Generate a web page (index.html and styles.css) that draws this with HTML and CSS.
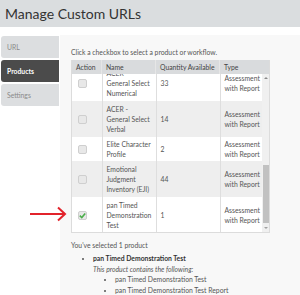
FILE: index.html
```html
<!DOCTYPE html>
<html lang="en">
<head>
  <meta charset="UTF-8" />
  <title>Manage Custom URLs</title>
  <link rel="stylesheet" href="styles.css">
</head>
<body>
  <h1 class="page-title">Manage Custom URLs</h1>

  <div class="layout">
    <nav class="tabs">
      <div class="tab">URL</div>
      <div class="tab active">Products</div>
      <div class="tab">Settings</div>
    </nav>

    <div class="panel">
      <p class="hint">Click a checkbox to select a product or workflow.</p>

      <div class="grid">
        <div class="grid-head">
          <div class="cell c-action">Action</div>
          <div class="cell c-name">Name</div>
          <div class="cell c-qty">Quantity Available</div>
          <div class="cell c-type">Type</div>
        </div>

        <div class="grid-body">
          <div class="viewport">
            <table class="rows">
              <tr>
                <td class="c-action"><span class="check"></span></td>
                <td class="c-name">ACER -<br>General Select<br>Numerical</td>
                <td class="c-qty">33</td>
                <td class="c-type">Assessment<br>with Report</td>
              </tr>
              <tr class="alt">
                <td class="c-action"><span class="check"></span></td>
                <td class="c-name">ACER -<br>General Select<br>Verbal</td>
                <td class="c-qty">14</td>
                <td class="c-type">Assessment<br>with Report</td>
              </tr>
              <tr class="short">
                <td class="c-action"><span class="check"></span></td>
                <td class="c-name">Elite Character<br>Profile</td>
                <td class="c-qty">2</td>
                <td class="c-type">Assessment<br>with Report</td>
              </tr>
              <tr class="alt">
                <td class="c-action"><span class="check"></span></td>
                <td class="c-name">Emotional<br>Judgment<br>Inventory (EJI)</td>
                <td class="c-qty">44</td>
                <td class="c-type">Assessment<br>with Report</td>
              </tr>
              <tr>
                <td class="c-action">
                  <span class="check checked">
                    <svg viewBox="0 0 10 10" width="9" height="9"><path d="M2 5.2 L4.2 7.3 L8 2.8" fill="none" stroke="#4cae4c" stroke-width="1.8"/></svg>
                  </span>
                </td>
                <td class="c-name">pan Timed<br>Demonstration<br>Test</td>
                <td class="c-qty">1</td>
                <td class="c-type">Assessment<br>with Report</td>
              </tr>
            </table>
          </div>
          <div class="scrollbar">
            <span class="arrow up"></span>
            <div class="track"><div class="thumb"></div></div>
            <span class="arrow down"></span>
          </div>
        </div>
      </div>

      <p class="selected">You've selected 1 product</p>
      <ul class="picked">
        <li>
          <strong>pan Timed Demonstration Test</strong>
          <em class="contains">This product contains the following:</em>
          <ul>
            <li>pan Timed Demonstration Test</li>
            <li>pan Timed Demonstration Test Report</li>
          </ul>
        </li>
      </ul>
    </div>
  </div>

  <svg class="pointer" viewBox="0 0 40 18" width="40" height="18">
    <path d="M2 9 H37 M30 2.5 L37 9 L30 15.5" fill="none" stroke="#e2232b" stroke-width="2"/>
  </svg>
</body>
</html>
```

FILE: styles.css
```css
* {
  margin: 0;
  padding: 0;
  box-sizing: border-box;
}

body {
  font-family: 'Lato', 'Liberation Sans', sans-serif;
  font-size: 6.8px;
  line-height: 10px;
  color: #555;
  background: #fff;
  position: relative;
  height: 295px;
  overflow: hidden;
}

.page-title {
  background: #dadddf;
  height: 27px;
  line-height: 27px;
  padding-left: 5px;
  font-size: 14px;
  font-weight: 400;
  color: #333;
}

.layout {
  display: flex;
  margin-top: 8px;
  height: 260px;
}

.tabs {
  width: 60px;
  display: flex;
  flex-direction: column;
  gap: 2px;
  padding: 1px 1px 0 1px;
}

.tab {
  height: 22px;
  line-height: 22px;
  padding-left: 6px;
  background: #dcdee0;
  color: #8a8a8a;
  border-radius: 3px 0 0 3px;
}

.tab.active {
  background: #4b4b4b;
  color: #fff;
  font-weight: 700;
}

.panel {
  flex: 1;
  background: #f8f8f8;
  padding: 12px 0 0 11px;
}

.hint {
  color: #555;
  margin-bottom: 3px;
}

.grid {
  width: 199px;
  border: 1px solid #dcdcdc;
  border-top: none;
}

.grid-head {
  display: flex;
  height: 14px;
  background: #d9dbdd;
  color: #444;
}

.grid-head .cell {
  line-height: 14px;
  padding-left: 4px;
  border-right: 1px solid #e6e6e6;
  white-space: nowrap;
  overflow: hidden;
}

.grid-head .cell:last-child {
  border-right: none;
}

.c-action { width: 30px; }
.c-name { width: 54px; }
.c-qty { width: 64px; }
.grid-head .c-type { flex: 1; }

.grid-body {
  display: flex;
  height: 158px;
}

.viewport {
  width: 191px;
  overflow: hidden;
}

.rows {
  width: 191px;
  border-collapse: collapse;
  table-layout: fixed;
  margin-top: -9px;
}

.rows td {
  padding: 3px 0 3px 4px;
  vertical-align: middle;
  border-right: 1px solid #dedede;
  background: #fff;
  white-space: nowrap;
  overflow: hidden;
}

.rows tr.short td {
  padding-top: 2px;
  padding-bottom: 2px;
}

.rows tr.alt td {
  background: #eeeeee;
}

.rows td.c-action {
  width: 30px;
  padding-left: 6px;
}

.rows td.c-type {
  width: 43px;
  border-right: none;
}

.check {
  display: block;
  width: 9px;
  height: 9px;
  border: 1px solid #cfcfcf;
  border-radius: 2px;
  background: #e8e8e8;
}

.check svg {
  display: block;
  margin: -1px 0 0 -1px;
}

.scrollbar {
  width: 7px;
  background: #f0f0f0;
  display: flex;
  flex-direction: column;
  align-items: center;
}

.arrow {
  width: 0;
  height: 0;
  border-left: 2px solid transparent;
  border-right: 2px solid transparent;
  margin: 3px 0;
}

.arrow.up { border-bottom: 2px solid #8a8a8a; }
.arrow.down { border-top: 2px solid #a0a0a0; }

.track {
  flex: 1;
  width: 100%;
  display: flex;
  flex-direction: column;
  justify-content: flex-end;
}

.thumb {
  width: 6px;
  height: 58px;
  margin: 0 auto 1px;
  background: #c1c1c1;
}

.selected {
  margin-top: 7px;
}

.picked {
  list-style: disc;
  padding-left: 22px;
  margin-top: 3px;
  line-height: 10.5px;
}

.picked strong {
  color: #333;
  font-weight: 700;
}

.contains {
  display: block;
}

.picked ul {
  list-style: disc;
  padding-left: 22px;
}

.pointer {
  position: absolute;
  left: 28px;
  top: 205px;
}
```
